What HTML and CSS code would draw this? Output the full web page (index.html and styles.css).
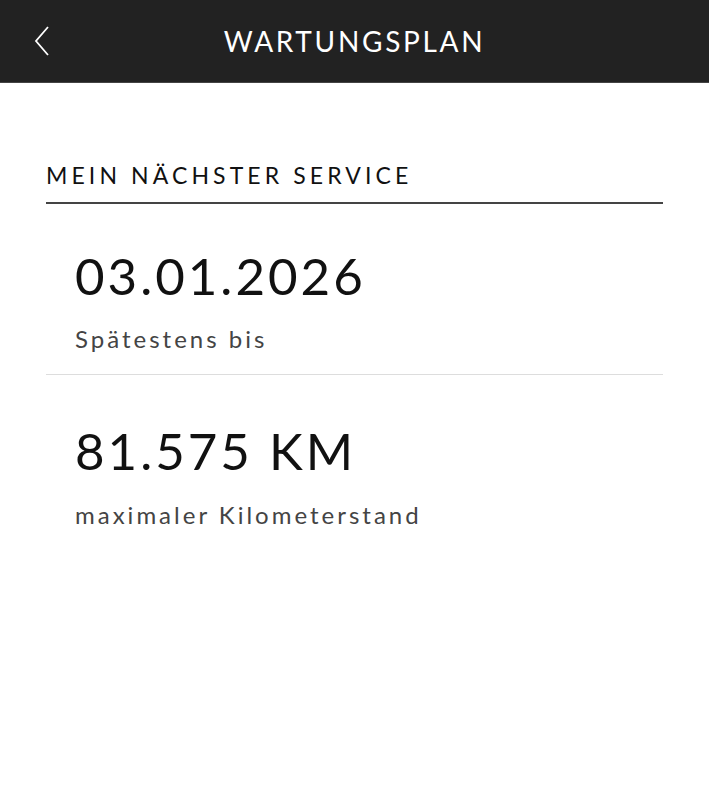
FILE: index.html
```html
<!DOCTYPE html>
<html lang="de">
<head>
    <meta charset="UTF-8">
    <meta name="viewport" content="width=device-width, initial-scale=1.0">
    <title>Wartungsplan</title>
    <link rel="stylesheet" href="styles.css">
</head>
<body>

<header class="kopf">
    <a class="zurueck" href="#">
        <svg width="16" height="30" viewBox="0 0 16 30">
            <polyline points="14,1 2,15 14,29" fill="none" stroke="#fff" stroke-width="1.8"/>
        </svg>
    </a>
    <h1>WARTUNGSPLAN</h1>
</header>

<main class="inhalt">
    <h2 class="abschnitt">MEIN NÄCHSTER SERVICE</h2>

    <div class="eintrag">
        <p class="wert">03.01.2026</p>
        <p class="label">Spätestens bis</p>
    </div>

    <div class="eintrag">
        <p class="wert">81.575 KM</p>
        <p class="label">maximaler Kilometerstand</p>
    </div>
</main>

</body>
</html>
```

FILE: styles.css
```css
body {
    margin: 0;
    font-family: Lato, "Open Sans", sans-serif;
    background-color: #fff;
    color: #111;
}
.kopf {
    position: relative;
    height: 82px;
    background-color: #222;
    border-bottom: 1px solid #444;
    display: flex;
    align-items: center;
    justify-content: center;
}
.zurueck {
    position: absolute;
    left: 34px;
    top: 26px;
}
.kopf h1 {
    margin: 0;
    color: #fff;
    font-weight: 400;
    font-size: 28px;
    letter-spacing: 2.7px;
}
.inhalt {
    padding: 0 46px;
}
.abschnitt {
    margin: 78px 0 0;
    padding-bottom: 13px;
    border-bottom: 2px solid #444;
    font-weight: 400;
    font-size: 23px;
    letter-spacing: 4.1px;
}
.eintrag {
    padding: 43px 29px 21px;
}
.eintrag:first-of-type {
    padding-top: 39px;
}
.eintrag + .eintrag {
    border-top: 1px solid #ddd;
}
.wert {
    margin: 0;
    font-size: 51px;
    letter-spacing: 3px;
    line-height: 1.3;
}
.label {
    margin: 15px 0 0;
    font-size: 24px;
    color: #444;
    letter-spacing: 3px;
}
```
